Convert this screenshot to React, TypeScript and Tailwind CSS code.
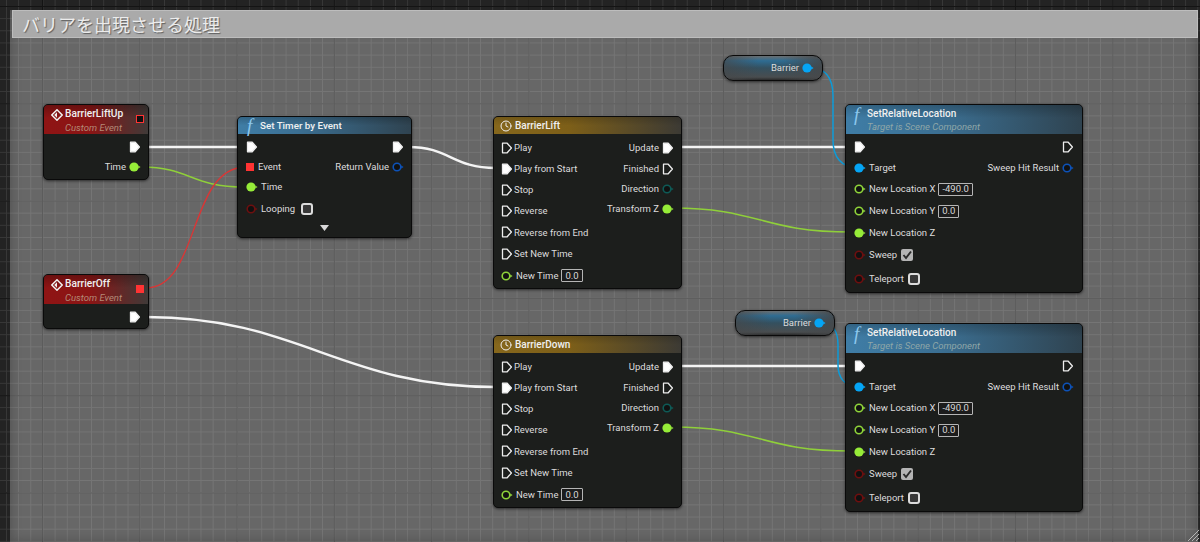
import { ReactNode } from "react";
import { Clock } from "lucide-react";

type PinKind = "exec" | "execOn" | "data" | "square";

// pin glyphs, 12px wide so labels line up
function Pin({ kind, color = "#8fd43a", on = false }: { kind: PinKind; color?: string; on?: boolean }) {
  if (kind === "exec" || kind === "execOn") {
    return (
      <svg width="12" height="14" viewBox="0 0 12 14" className="shrink-0">
        <path
          d="M1.5 2.2 H6.2 L10.4 7 L6.2 11.8 H1.5 Z"
          fill={kind === "execOn" ? "#fff" : "none"}
          stroke="#eee"
          strokeWidth="1.3"
          strokeLinejoin="round"
        />
      </svg>
    );
  }
  if (kind === "square") {
    return <div className="w-[8px] h-[8px] bg-[#ff3333] shrink-0" />;
  }
  return (
    <svg width="12" height="10" viewBox="0 0 12 10" className="shrink-0">
      <circle cx="5" cy="5" r={on ? 4.6 : 3.8} fill={on ? (color === "#8fd43a" ? "#96ec38" : color) : "#111"} stroke={color} strokeWidth={on ? 0 : 1.6} />
      <path d="M9.2 3.5 L11.6 5 L9.2 6.5 Z" fill={color} />
    </svg>
  );
}

function Label({ children }: { children: ReactNode }) {
  return <span className="text-[9.5px] leading-none text-[#dcdcdc] whitespace-nowrap">{children}</span>;
}

function ValueBox({ children }: { children: ReactNode }) {
  return (
    <span className="border border-[#b5b5b5] rounded-[1px] px-[3px] h-[13px] flex items-center text-[9.5px] leading-none text-[#d8d8d8] bg-[#1c1c1c]">
      {children}
    </span>
  );
}

function Check({ on }: { on?: boolean }) {
  if (on) {
    return (
      <span className="block w-[12px] h-[12px] rounded-[2px] bg-[#b4b4b4] shrink-0">
        <svg width="12" height="12" viewBox="0 0 12 12">
          <path d="M2.5 6 L5 9 L10 2.5" fill="none" stroke="#2a2a2a" strokeWidth="1.9" />
        </svg>
      </span>
    );
  }
  return <span className="block w-[12px] h-[12px] rounded-[3px] border-2 border-[#dcdcdc] bg-[#383838] shrink-0" />;
}

function EventIcon() {
  return (
    <svg width="12" height="12" viewBox="0 0 12 12" className="shrink-0">
      <path d="M6 .8 L11.2 6 L6 11.2 L.8 6 Z" fill="none" stroke="#f2f2f2" strokeWidth="1.5" />
      <path d="M3.2 6 L6 3.2 L6 8.8 Z" fill="#f2f2f2" />
    </svg>
  );
}

function FuncIcon() {
  return <span className="font-['Liberation_Serif',serif] italic text-[19px] leading-none text-[#8cc8ee] w-[10px] shrink-0">f</span>;
}

function EventNode({ pos, h, title, pinOn, children }: { pos: string; h: string; title: string; pinOn?: boolean; children: ReactNode }) {
  return (
    <div className={`absolute ${pos} ${h} w-[106px] rounded-[5px] border border-[#0a0a0a] bg-[#1c1e1c] shadow-[0_1px_3px_rgba(0,0,0,0.6)]`}>
      <div className="h-[29px] rounded-t-[4px] pl-[7px] pr-[4px] pt-[3px] flex bg-[linear-gradient(to_bottom,rgba(0,0,0,0.25),transparent_45%),linear-gradient(to_right,#8f1414,#8a1515_45%,#3f3a38)]">
        <div className="flex-1">
          <div className="flex items-center gap-[2px] h-[13px]">
            <EventIcon />
            <span className="text-[10.2px] leading-none font-medium text-[#f0f0f0] whitespace-nowrap">{title}</span>
          </div>
          <div className="pl-[14px] mt-[1px] italic text-[9.5px] leading-[12px] text-[#b48b78] whitespace-nowrap">Custom Event</div>
        </div>
        <div className="pt-[7px]">
          {pinOn ? (
            <div className="w-[8px] h-[8px] bg-[#ff3333]" />
          ) : (
            <div className="w-[8px] h-[8px] border-[1.5px] border-[#ff3333] bg-[#111]" />
          )}
        </div>
      </div>
      {children}
    </div>
  );
}

function Row({ h, pin, children, gap = "gap-[3px]" }: { h: string; pin: ReactNode; children?: ReactNode; gap?: string }) {
  return (
    <div className={`${h} flex items-center ${gap}`}>
      {pin}
      {children}
    </div>
  );
}

function RowR({ h, pin, label }: { h: string; pin: ReactNode; label?: string }) {
  return (
    <div className={`${h} flex items-center justify-end gap-[3px]`}>
      {label && <Label>{label}</Label>}
      {pin}
    </div>
  );
}

function SetTimerNode() {
  return (
    <div className="absolute left-[237px] top-[116px] w-[175px] h-[122px] rounded-[5px] border border-[#0a0a0a] bg-[#1c1e1c] shadow-[0_1px_3px_rgba(0,0,0,0.6)]">
      <div className="h-[17px] rounded-t-[4px] pl-[9px] flex items-center gap-[3px] bg-[linear-gradient(to_bottom,rgba(0,0,0,0.2),transparent_50%),linear-gradient(to_right,#3f7da6,#3b6f92_35%,#2f4350)]">
        <FuncIcon />
        <span className="text-[9.8px] leading-none font-medium text-[#f0f0f0]">Set Timer by Event</span>
      </div>
      <div className="flex justify-between pt-[3px] pl-[8px] pr-[7px]">
        <div>
          <Row h="h-[20px]" pin={<Pin kind="execOn" />} />
          <Row h="h-[20px]" gap="gap-[4px]" pin={<Pin kind="square" />}>
            <Label>Event</Label>
          </Row>
          <Row h="h-[20px]" pin={<Pin kind="data" on />}>
            <Label>Time</Label>
          </Row>
          <Row h="h-[23px]" pin={<Pin kind="data" color="#6e0f0f" />}>
            <Label>Looping</Label>
            <span className="block ml-[3px]"><Check /></span>
          </Row>
        </div>
        <div>
          <RowR h="h-[20px]" pin={<Pin kind="execOn" />} />
          <RowR h="h-[20px]" pin={<Pin kind="data" color="#0d52b8" />} label="Return Value" />
        </div>
      </div>
      <div className="flex justify-center mt-[5px]">
        <svg width="9" height="6" viewBox="0 0 9 6"><path d="M0 0 H9 L4.5 6 Z" fill="#d8d8d8" /></svg>
      </div>
    </div>
  );
}

function TimelineNode({ pos, title }: { pos: string; title: string }) {
  const left = ["Stop", "Reverse", "Reverse from End", "Set New Time"];
  return (
    <div className={`absolute ${pos} w-[189px] h-[173px] rounded-[5px] border border-[#0a0a0a] bg-[#1c1e1c] shadow-[0_1px_3px_rgba(0,0,0,0.6)]`}>
      <div className="h-[17px] rounded-t-[4px] pl-[6px] flex items-center gap-[3px] bg-[linear-gradient(to_bottom,rgba(0,0,0,0.15),transparent_50%),linear-gradient(to_right,#86671c,#7d5f18_40%,#3c3a34)]">
        <Clock size={12} strokeWidth={2} className="text-[#f0f0f0] shrink-0" />
        <span className="text-[10px] leading-none font-medium text-[#f0f0f0]">{title}</span>
      </div>
      <div className="flex justify-between pt-[3px] pl-[7px] pr-[7px]">
        <div>
          <Row h="h-[21px]" gap="gap-[1px]" pin={<Pin kind="exec" />}>
            <Label>Play</Label>
          </Row>
          <Row h="h-[21px]" gap="gap-[1px]" pin={<Pin kind="execOn" />}>
            <Label>Play from Start</Label>
          </Row>
          {left.map((t) => (
            <Row key={t} h="h-[21.4px]" gap="gap-[1px]" pin={<Pin kind="exec" />}>
              <Label>{t}</Label>
            </Row>
          ))}
          <Row h="h-[22px]" pin={<Pin kind="data" />}>
            <Label>New Time</Label>
            <ValueBox>0.0</ValueBox>
          </Row>
        </div>
        <div>
          <RowR h="h-[21px]" pin={<Pin kind="execOn" />} label="Update" />
          <RowR h="h-[21px]" pin={<Pin kind="exec" />} label="Finished" />
          <RowR h="h-[20px]" pin={<Pin kind="data" color="#0e5a56" />} label="Direction" />
          <RowR h="h-[20px]" pin={<Pin kind="data" on />} label="Transform Z" />
        </div>
      </div>
    </div>
  );
}

function LocationNode({ pos }: { pos: string }) {
  return (
    <div className={`absolute ${pos} w-[238px] h-[189px] rounded-[5px] border border-[#0a0a0a] bg-[#1c1e1c] shadow-[0_1px_3px_rgba(0,0,0,0.6)]`}>
      <div className="h-[29px] rounded-t-[4px] pl-[8px] pt-[2px] bg-[linear-gradient(to_bottom,rgba(0,0,0,0.2),transparent_45%),linear-gradient(to_right,#3f7da6,#3b6f92_40%,#2f4350)]">
        <div className="flex items-center gap-[3px] h-[14px]">
          <FuncIcon />
          <span className="text-[10px] leading-none font-medium text-[#f0f0f0]">SetRelativeLocation</span>
        </div>
        <div className="pl-[13px] italic text-[9.5px] leading-[12px] text-[#8fa7a8] whitespace-nowrap">Target is Scene Component</div>
      </div>
      <div className="flex justify-between pt-[3px] pl-[8px] pr-[8px]">
        <div>
          <Row h="h-[20px]" pin={<Pin kind="execOn" />} />
          <Row h="h-[21px]" pin={<Pin kind="data" color="#05a5f5" on />}>
            <Label>Target</Label>
          </Row>
          <Row h="h-[22px]" pin={<Pin kind="data" />}>
            <Label>New Location X</Label>
            <ValueBox>-490.0</ValueBox>
          </Row>
          <Row h="h-[22px]" pin={<Pin kind="data" />}>
            <Label>New Location Y</Label>
            <ValueBox>0.0</ValueBox>
          </Row>
          <Row h="h-[21px]" pin={<Pin kind="data" on />}>
            <Label>New Location Z</Label>
          </Row>
          <Row h="h-[23px]" pin={<Pin kind="data" color="#6e0f0f" />}>
            <Label>Sweep</Label>
            <span className="block ml-[1px]"><Check on /></span>
          </Row>
          <Row h="h-[25px]" pin={<Pin kind="data" color="#6e0f0f" />}>
            <Label>Teleport</Label>
            <span className="block ml-[1px]"><Check /></span>
          </Row>
        </div>
        <div>
          <RowR h="h-[20px]" pin={<Pin kind="exec" />} />
          <RowR h="h-[21px]" pin={<Pin kind="data" color="#0d52b8" />} label="Sweep Hit Result" />
        </div>
      </div>
    </div>
  );
}

function VarNode({ pos }: { pos: string }) {
  return (
    <div className={`absolute ${pos} w-[100px] h-[26px] rounded-[10px] border border-[#0a0a0a] shadow-[0_1px_3px_rgba(0,0,0,0.6)] flex items-center justify-end gap-[3px] pr-[8px] bg-[linear-gradient(to_right,rgba(70,72,74,0.7),transparent_35%,transparent_60%,rgba(70,72,74,0.9)),linear-gradient(to_bottom,#6a6e70_0%,#2e6c92_20%,#34505f_50%,#494d4f_88%,#2a2a2a_100%)]`}>
      <Label>Barrier</Label>
      <Pin kind="data" color="#05a5f5" on />
    </div>
  );
}

function Wires() {
  return (
    <svg className="absolute inset-0" width="1200" height="542" fill="none">
      <g stroke="#f4f4f4" strokeWidth="2.4">
        <path d="M146 147 H240" />
        <path d="M408 147 C 450 147, 452 168, 496 168" />
        <path d="M678 147 H848" />
        <path d="M146 317 C 300 317, 340 387, 496 387" />
        <path d="M678 366 H848" />
      </g>
      <g stroke="#8fcf3a" strokeWidth="1.5">
        <path d="M142 167 C 190 167, 190 187, 245 187" />
        <path d="M672 208 C 760 208, 760 232, 852 232" />
        <path d="M672 427 C 760 427, 760 451, 852 451" />
      </g>
      <path d="M146 288 C 200 288, 188 167, 246 167" stroke="#d93636" strokeWidth="1.4" />
      <g stroke="#0c9bd8" strokeWidth="1.5">
        <path d="M810 68 C 826 68, 833 78, 833 96 L 833 140 C 833 158, 842 167, 856 167" />
        <path d="M822 323 C 833 323, 838 332, 838 345 L 838 365 C 838 378, 845 386, 856 386" />
      </g>
    </svg>
  );
}

export default function App() {
  return (
    <div className="relative w-[1200px] h-[542px] overflow-hidden font-['Roboto',sans-serif] bg-[#232323] bg-[linear-gradient(to_right,#141414_1px,transparent_1px),linear-gradient(to_bottom,#141414_1px,transparent_1px),linear-gradient(to_right,#383838_1px,transparent_1px),linear-gradient(to_bottom,#383838_1px,transparent_1px)] bg-[size:97.3px_97.3px,97.3px_97.3px,12.16px_12.16px,12.16px_12.16px] bg-[position:42px_6px,42px_6px,6px_6px,6px_6px]">
      <div className="absolute left-[10px] top-[10px] right-[2px] bottom-0 bg-white/[0.31] shadow-[inset_0_0_12px_rgba(0,0,0,0.25)]">
        <div className="h-[28px] ml-[2px] bg-[#aaaaaa] border border-[#bdbdbd] flex items-center pl-[9px]">
          <span className="font-['Noto_Sans_CJK_JP',sans-serif] text-[18px] leading-none text-[#ececec] [text-shadow:1px_1px_1px_rgba(0,0,0,0.45)]">バリアを出現させる処理</span>
        </div>
      </div>
      <Wires />
      <EventNode pos="left-[43px] top-[104px]" h="h-[76px]" title="BarrierLiftUp">
        <div className="pl-[8px] pr-[7px] pt-[3px]">
          <RowR h="h-[20px]" pin={<Pin kind="execOn" />} />
          <RowR h="h-[20px]" pin={<Pin kind="data" on />} label="Time" />
        </div>
      </EventNode>
      <EventNode pos="left-[43px] top-[274px]" h="h-[55px]" title="BarrierOff" pinOn>
        <div className="pl-[8px] pr-[7px] pt-[3px]">
          <RowR h="h-[20px]" pin={<Pin kind="execOn" />} />
        </div>
      </EventNode>
      <SetTimerNode />
      <TimelineNode pos="left-[493px] top-[116px]" title="BarrierLift" />
      <TimelineNode pos="left-[493px] top-[335px]" title="BarrierDown" />
      <VarNode pos="left-[723px] top-[55px]" />
      <VarNode pos="left-[735px] top-[310px]" />
      <LocationNode pos="left-[845px] top-[104px]" />
      <LocationNode pos="left-[845px] top-[323px]" />
      <svg className="absolute right-[1px] bottom-[1px]" width="11" height="11" viewBox="0 0 11 11">
        <path d="M0 11 L11 0 M4 11 L11 4 M8 11 L11 8" stroke="#b5b5b5" strokeWidth="1" />
      </svg>
    </div>
  );
}
